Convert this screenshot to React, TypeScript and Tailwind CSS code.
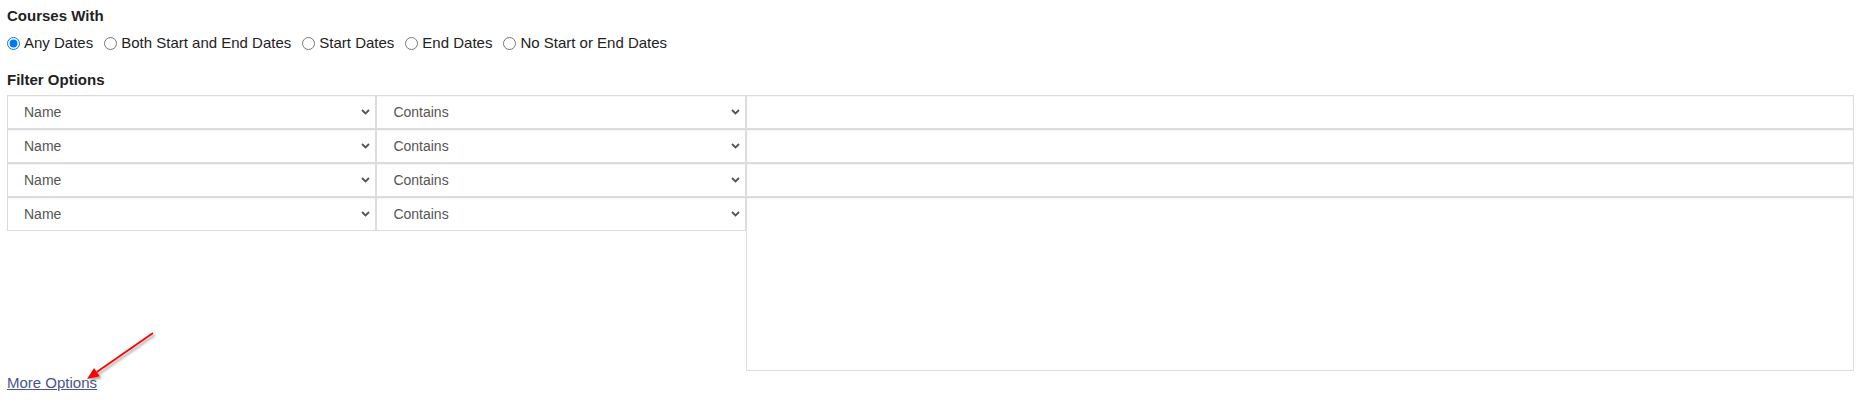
import React from 'react';

const DATE_OPTIONS = [
  'Any Dates',
  'Both Start and End Dates',
  'Start Dates',
  'End Dates',
  'No Start or End Dates',
];

function Chevron() {
  return (
    <svg
      className="pointer-events-none absolute right-[6px] top-1/2 -translate-y-1/2"
      width="9"
      height="6"
      viewBox="0 0 9 6"
      aria-hidden="true"
    >
      <path d="M1 1 L4.5 4.5 L8 1" fill="none" stroke="#555" strokeWidth="1.8" />
    </svg>
  );
}

function FilterSelect({ value }: { value: string }) {
  return (
    <div className="relative">
      <select
        defaultValue={value}
        className="block h-[34px] w-full appearance-none border border-[#dcdcdc] bg-white pl-[16px] pr-[20px] text-[14px] text-[#555] outline-none shadow-[inset_0_1px_1px_rgba(0,0,0,0.04)]"
      >
        <option>{value}</option>
      </select>
      <Chevron />
    </div>
  );
}

export default function App() {
  const rows = [0, 1, 2, 3];

  return (
    <div className="relative min-h-[405px] bg-white pl-[7px] pr-[11px] pt-[7px] font-['Liberation_Sans',Arial,sans-serif] text-[#222]">
      <h3 className="text-[15px] font-bold leading-[17px]">Courses With</h3>

      <div className="mt-[9px] flex h-[20px] items-center gap-[11px] text-[15px]">
        {DATE_OPTIONS.map((label, i) => (
          <label key={label} className="inline-flex items-center">
            <input
              type="radio"
              name="courseDates"
              defaultChecked={i === 0}
              className="m-0 h-[13px] w-[13px]"
            />
            <span className="ml-[4px]">{label}</span>
          </label>
        ))}
      </div>

      <h3 className="mt-[18px] text-[15px] font-bold leading-[17px]">Filter Options</h3>

      <div className="mt-[7px] flex items-start">
        <div className="grid w-[40%] grid-cols-2">
          {rows.map((r) => (
            <React.Fragment key={r}>
              <FilterSelect value="Name" />
              <FilterSelect value="Contains" />
            </React.Fragment>
          ))}
        </div>
        <div className="flex w-[60%] flex-col">
          {rows.slice(0, 3).map((r) => (
            <input
              key={r}
              type="text"
              className="block h-[34px] w-full border border-[#dcdcdc] bg-white px-[12px] text-[14px] outline-none shadow-[inset_0_1px_1px_rgba(0,0,0,0.04)]"
            />
          ))}
          <textarea className="block h-[174px] w-full resize-none border border-[#dcdcdc] bg-white px-[12px] py-[6px] text-[14px] outline-none shadow-[inset_0_1px_1px_rgba(0,0,0,0.04)]" />
        </div>
      </div>

      <a
        href="#"
        className="mt-[2px] inline-block text-[15px] leading-[17px] text-[#4a5490] underline"
      >
        More Options
      </a>

      {/* annotation arrow */}
      <svg
        className="pointer-events-none absolute left-[80px] top-[325px] drop-shadow-[2px_2px_1px_rgba(0,0,0,0.35)]"
        width="80"
        height="60"
        viewBox="0 0 80 60"
        aria-hidden="true"
      >
        <line x1="73" y1="8" x2="16.8" y2="47.1" stroke="#ff0000" strokeWidth="1.8" />
        <polygon points="7,54 19.7,51.2 14,43" fill="#ff0000" />
      </svg>
    </div>
  );
}
